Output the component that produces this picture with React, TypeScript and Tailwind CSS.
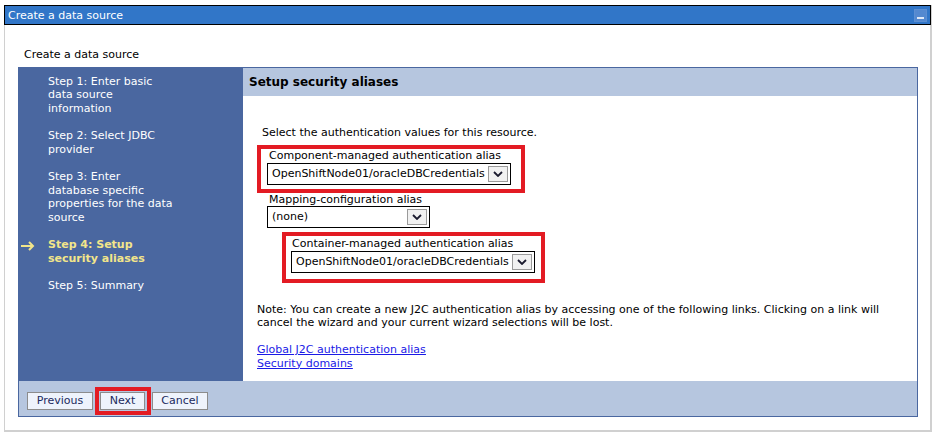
import React from "react";

const steps = [
  { lines: ["Step 1: Enter basic", "data source", "information"] },
  { lines: ["Step 2: Select JDBC", "provider"] },
  { lines: ["Step 3: Enter", "database specific", "properties for the data", "source"] },
  { lines: ["Step 4: Setup", "security aliases"], current: true },
  { lines: ["Step 5: Summary"] },
];

function Chevron() {
  return (
    <svg width="10" height="6" viewBox="0 0 10 6">
      <path d="M1 1 L5 5 L9 1" fill="none" stroke="#1a1a2e" strokeWidth="1.8" />
    </svg>
  );
}

function Select({ value, width }: { value: string; width: string }) {
  return (
    <div className={`flex h-[22px] items-center justify-between border border-black bg-white ${width}`}>
      <span className="pl-[4px] text-black">{value}</span>
      <span className="mr-[2px] flex h-[16px] w-[20px] items-center justify-center border border-[#9a9a9a] bg-[#f1f1f1]">
        <Chevron />
      </span>
    </div>
  );
}

function Btn({ label, width }: { label: string; width: string }) {
  return (
    <button
      type="button"
      className={`flex h-[18px] items-center justify-center border border-[#8c8c8c] bg-[#eef3fc] text-[11px] text-[#1b2a5e] ${width}`}
    >
      {label}
    </button>
  );
}

export default function App() {
  return (
    <div className="h-[438px] w-[938px] bg-white pl-[4px] pt-[5px] font-['DejaVu_Sans',sans-serif] text-[11px] leading-[13.5px] text-black">
      <div className="h-[427px] w-[928px] border border-r-2 border-b-2 border-[#d0d0d0]">
        {/* title bar */}
        <div className="-mx-px -mt-px flex h-[20px] items-center justify-between border border-black bg-[#3176c8] pl-[3px] pt-[1px] text-white">
          <span>Create a data source</span>
          <span className="mr-[3px] flex h-[13px] w-[13px] items-end justify-center border border-[#5d8fd2] bg-[#5489d0] pb-[2px]">
            <span className="h-[2px] w-[7px] bg-[#dfe9f7]" />
          </span>
        </div>

        <div className="pl-[19px] pt-[23px]">Create a data source</div>

        {/* wizard */}
        <div className="ml-[13px] mt-[5px] w-[900px] border border-[#4a67a0]">
          <div className="flex h-[313px]">
            <div className="w-[224px] bg-[#4a67a0] pl-[29px] pt-[7px]">
              {steps.map((s, i) => (
                <div key={i} className={`relative mb-[14px] ${s.current ? "font-bold text-[#f2e58a]" : "text-white"}`}>
                  {s.current && (
                    <svg className="absolute left-[-28px] top-[3px]" width="15" height="10" viewBox="0 0 15 10">
                      <path d="M1 5 H13 M9 1 L13 5 L9 9" fill="none" stroke="#f2e58a" strokeWidth="2" />
                    </svg>
                  )}
                  {s.lines.map((l) => (
                    <div key={l}>{l}</div>
                  ))}
                </div>
              ))}
            </div>

            <div className="flex-1">
              <div className="flex h-[28px] items-center bg-[#b6c6df] pl-[6px] pt-[2px] text-[12px] font-bold">
                Setup security aliases
              </div>
              <div className="pl-[14px] pt-[30px]">
                <div className="ml-[5px]">Select the authentication values for this resource.</div>

                <div className="mt-[6px] w-[268px] border-4 border-[#e31b23] pb-[4px] pl-[6px]">
                  <div className="pl-[2px]">Component-managed authentication alias</div>
                  <Select value="OpenShiftNode01/oracleDBCredentials" width="w-[244px]" />
                </div>

                <div className="ml-[10px] pl-[2px]">Mapping-configuration alias</div>
                <div className="ml-[10px]">
                  <Select value="(none)" width="w-[163px]" />
                </div>

                <div className="ml-[25px] mt-[4px] w-[263px] border-4 border-[#e31b23] pb-[6px] pl-[5px] pt-[1px]">
                  <div className="pl-[1px]">Container-managed authentication alias</div>
                  <Select value="OpenShiftNode01/oracleDBCredentials" width="w-[244px]" />
                </div>

                <div className="mt-[20px]">
                  Note: You can create a new J2C authentication alias by accessing one of the following links. Clicking on a link will
                  <br />
                  cancel the wizard and your current wizard selections will be lost.
                </div>

                <div className="mt-[13.5px] flex flex-col items-start text-[#1a1ae6] underline">
                  <a href="#">Global J2C authentication alias</a>
                  <a href="#">Security domains</a>
                </div>
              </div>
            </div>
          </div>

          {/* footer */}
          <div className="flex h-[35px] items-center bg-[#b6c6df] pl-[8px] pt-[5px]">
            <Btn label="Previous" width="w-[66px]" />
            <div className="ml-[2px] flex h-[28px] w-[56px] items-center border-4 border-[#e31b23] pl-px">
              <Btn label="Next" width="w-[45px]" />
            </div>
            <div className="ml-px">
              <Btn label="Cancel" width="w-[56px]" />
            </div>
          </div>
        </div>
      </div>
    </div>
  );
}
